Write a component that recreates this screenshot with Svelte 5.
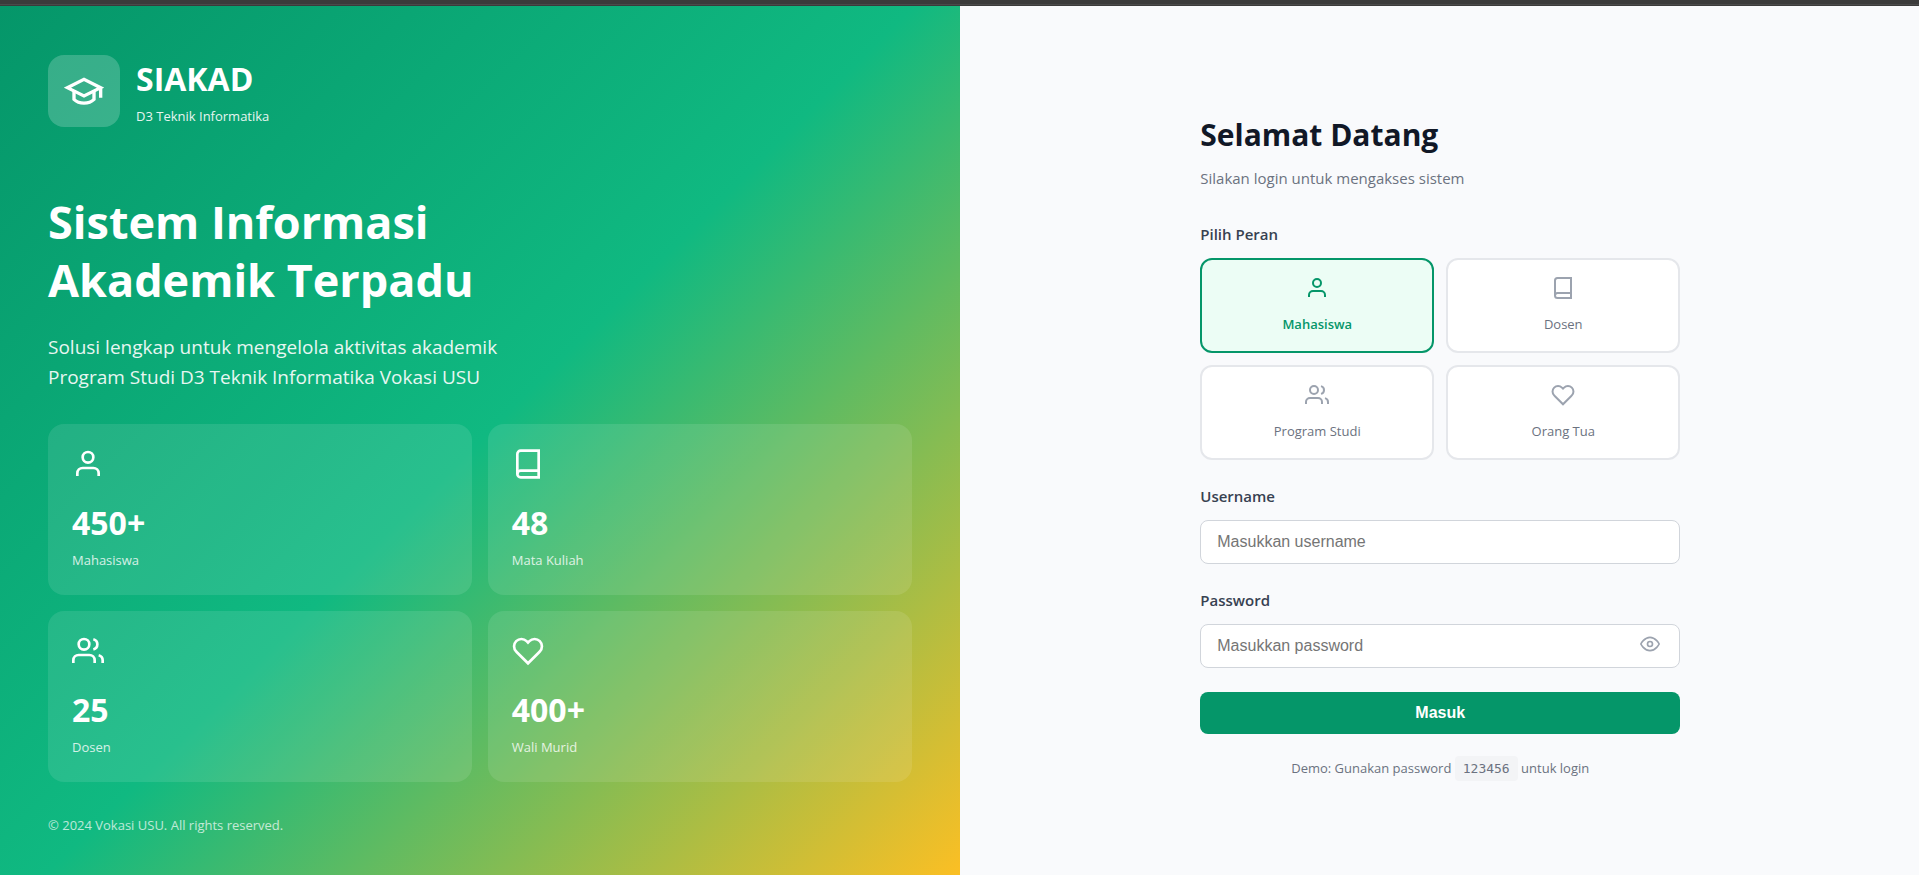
<script>
    let role = $state("mahasiswa");
    let username = $state("");
    let password = $state("");
    let showPassword = $state(false);

    const stats = [
        { icon: "user", value: "450+", label: "Mahasiswa" },
        { icon: "book", value: "48", label: "Mata Kuliah" },
        { icon: "users", value: "25", label: "Dosen" },
        { icon: "heart", value: "400+", label: "Wali Murid" }
    ];

    const roles = [
        { id: "mahasiswa", icon: "user", label: "Mahasiswa" },
        { id: "dosen", icon: "book", label: "Dosen" },
        { id: "prodi", icon: "users", label: "Program Studi" },
        { id: "ortu", icon: "heart", label: "Orang Tua" }
    ];

    function handleSubmit(e) {
        e.preventDefault();
    }
</script>

{#snippet icon(name, size)}
    <svg width={size} height={size} viewBox="0 0 24 24" fill="none" stroke="currentColor" stroke-width="2" aria-hidden="true">
        {#if name === "user"}
            <path d="M20 21v-2a4 4 0 0 0-4-4H8a4 4 0 0 0-4 4v2" />
            <circle cx="12" cy="7" r="4" />
        {:else if name === "book"}
            <path d="M4 19.5A2.5 2.5 0 0 1 6.5 17H20" />
            <path d="M6.5 2H20v20H6.5A2.5 2.5 0 0 1 4 19.5v-15A2.5 2.5 0 0 1 6.5 2z" />
        {:else if name === "users"}
            <path d="M17 21v-2a4 4 0 0 0-4-4H5a4 4 0 0 0-4 4v2" />
            <circle cx="9" cy="7" r="4" />
            <path d="M23 21v-2a4 4 0 0 0-3-3.87" />
            <path d="M16 3.13a4 4 0 0 1 0 7.75" />
        {:else if name === "heart"}
            <path d="M20.84 4.61a5.5 5.5 0 0 0-7.78 0L12 5.67l-1.06-1.06a5.5 5.5 0 0 0-7.78 7.78l1.06 1.06L12 21.23l7.78-7.78 1.06-1.06a5.5 5.5 0 0 0 0-7.78z" />
        {:else if name === "cap"}
            <path d="M22 10v6M2 10l10-5 10 5-10 5z" />
            <path d="M6 12v5c3 3 9 3 12 0v-5" />
        {:else if name === "eye"}
            <path d="M1 12s4-8 11-8 11 8 11 8-4 8-11 8-11-8-11-8z" />
            <circle cx="12" cy="12" r="3" />
        {/if}
    </svg>
{/snippet}

<div class="page">
    <div class="top-strip"></div>
    <div class="login-container">
        <section class="brand-panel">
            <header class="logo">
                <div class="logo-icon">{@render icon("cap", 40)}</div>
                <div>
                    <div class="logo-name">SIAKAD</div>
                    <p class="logo-sub">D3 Teknik Informatika</p>
                </div>
            </header>

            <div class="hero">
                <h1>Sistem Informasi<br />Akademik Terpadu</h1>
                <p class="hero-text">
                    Solusi lengkap untuk mengelola aktivitas akademik<br />
                    Program Studi D3 Teknik Informatika Vokasi USU
                </p>
                <div class="stats">
                    {#each stats as stat}
                        <div class="stat-card">
                            {@render icon(stat.icon, 32)}
                            <div class="stat-value">{stat.value}</div>
                            <div class="stat-label">{stat.label}</div>
                        </div>
                    {/each}
                </div>
            </div>

            <footer>© 2024 Vokasi USU. All rights reserved.</footer>
        </section>

        <main class="form-panel">
            <form onsubmit={handleSubmit}>
                <h2>Selamat Datang</h2>
                <p class="subtitle">Silakan login untuk mengakses sistem</p>

                <div class="field" role="group" aria-labelledby="role-label">
                    <span class="field-label" id="role-label">Pilih Peran</span>
                    <div class="roles">
                        {#each roles as r}
                            <button
                                type="button"
                                class="role-card"
                                class:active={role === r.id}
                                aria-pressed={role === r.id}
                                onclick={() => (role = r.id)}
                            >
                                {@render icon(r.icon, 24)}
                                <span>{r.label}</span>
                            </button>
                        {/each}
                    </div>
                </div>

                <div class="field">
                    <label class="field-label" for="username">Username</label>
                    <input id="username" type="text" placeholder="Masukkan username" bind:value={username} />
                </div>

                <div class="field">
                    <label class="field-label" for="password">Password</label>
                    <div class="password-wrap">
                        <input
                            id="password"
                            type={showPassword ? "text" : "password"}
                            placeholder="Masukkan password"
                            bind:value={password}
                        />
                        <button
                            type="button"
                            class="toggle"
                            aria-label="Tampilkan password"
                            onclick={() => (showPassword = !showPassword)}
                        >
                            {@render icon("eye", 20)}
                        </button>
                    </div>
                </div>

                <button type="submit" class="submit">Masuk</button>

                <p class="demo">Demo: Gunakan password <code>123456</code> untuk login</p>
            </form>
        </main>
    </div>
</div>

<style>
    :global(body) {
        margin: 0;
        background: #f9fafb;
    }

    .page {
        min-height: 100vh;
        display: flex;
        flex-direction: column;
        font-family: "Open Sans", "Noto Sans", sans-serif;
    }

    .page * {
        box-sizing: border-box;
    }

    h1, h2, p {
        margin: 0;
    }

    svg {
        display: block;
    }

    .top-strip {
        height: 6px;
        background: linear-gradient(#3b3b3b 4px, #4a4a4a 4px, #4a4a4a 5px, #3b3b3b 5px);
    }

    .login-container {
        flex: 1;
        display: grid;
        grid-template-columns: 1fr 1fr;
    }

    .brand-panel {
        display: flex;
        flex-direction: column;
        justify-content: space-between;
        padding: 48px 48px 39px;
        color: #fff;
        background: linear-gradient(135deg, #059669 0%, #10b981 50%, #fbbf24 100%);
    }

    .logo {
        display: flex;
        align-items: center;
        gap: 16px;
    }

    .logo-icon {
        width: 72px;
        height: 72px;
        display: flex;
        align-items: center;
        justify-content: center;
        background: rgba(255, 255, 255, 0.2);
        border-radius: 16px;
    }

    .logo-name {
        font-size: 32px;
        font-weight: 700;
        line-height: 50px;
        margin-bottom: 2px;
    }

    .logo-sub {
        font-size: 13px;
        line-height: 21px;
        opacity: 0.9;
    }

    .hero {
        margin-top: 32px;
    }

    h1 {
        font-size: 45px;
        font-weight: 700;
        line-height: 58px;
        margin-bottom: 23px;
    }

    .hero-text {
        font-size: 19px;
        line-height: 30px;
        opacity: 0.9;
        margin-bottom: 32px;
    }

    .stats {
        display: grid;
        grid-template-columns: 1fr 1fr;
        gap: 16px;
    }

    .stat-card {
        padding: 24px;
        background: rgba(255, 255, 255, 0.1);
        border-radius: 16px;
    }

    .stat-value {
        margin: 18px 0 2px;
        font-size: 32px;
        font-weight: 700;
        line-height: 50px;
    }

    .stat-label {
        font-size: 13px;
        line-height: 21px;
        opacity: 0.8;
    }

    footer {
        font-size: 13px;
        line-height: 21px;
        opacity: 0.7;
    }

    .form-panel {
        display: flex;
        align-items: center;
        justify-content: center;
        padding: 56px 48px 48px 50px;
        background: #f9fafc;
    }

    form {
        width: 100%;
        max-width: 480px;
    }

    h2 {
        font-size: 30px;
        font-weight: 700;
        line-height: 50px;
        color: #111827;
        margin-bottom: 6px;
    }

    .subtitle {
        font-size: 15px;
        line-height: 24px;
        color: #6b7280;
        margin-bottom: 32px;
    }

    .field {
        margin-bottom: 24px;
    }

    .field-label {
        display: block;
        margin-bottom: 12px;
        font-size: 15px;
        font-weight: 600;
        line-height: 24px;
        color: #374151;
    }

    .roles {
        display: grid;
        grid-template-columns: 1fr 1fr;
        gap: 12px;
    }

    .role-card {
        display: flex;
        flex-direction: column;
        align-items: center;
        gap: 14px;
        padding: 16px;
        background: #fff;
        border: 2px solid #e5e7eb;
        border-radius: 12px;
        color: #9ca3af;
        font-family: inherit;
        font-size: 13px;
        line-height: 21px;
        cursor: pointer;
    }

    .role-card span {
        color: #6b7280;
    }

    .role-card.active {
        background: #ecfdf5;
        border-color: #059669;
        color: #059669;
    }

    .role-card.active span {
        color: #059669;
        font-weight: 600;
    }

    input {
        display: block;
        width: 100%;
        height: 44px;
        padding: 0 16px;
        background: #fff;
        border: 1px solid #d1d5db;
        border-radius: 8px;
        font-family: Arial, "Liberation Sans", sans-serif;
        font-size: 16px;
        color: #111827;
    }

    input::placeholder {
        color: #757575;
    }

    .password-wrap {
        position: relative;
    }

    .password-wrap input {
        padding-right: 48px;
    }

    .toggle {
        position: absolute;
        top: 10px;
        right: 16px;
        padding: 0 4px;
        border: 0;
        background: none;
        color: #9ca3af;
        cursor: pointer;
    }

    .submit {
        display: block;
        width: 100%;
        height: 42px;
        border: 0;
        border-radius: 8px;
        background: #059669;
        color: #fff;
        font-family: Arial, "Liberation Sans", sans-serif;
        font-size: 16px;
        font-weight: 700;
        cursor: pointer;
    }

    .demo {
        margin-top: 24px;
        text-align: center;
        font-size: 13px;
        line-height: 21px;
        color: #6b7280;
    }

    code {
        padding: 5px 8px;
        border-radius: 4px;
        background: #f3f4f6;
        font-family: "DejaVu Sans Mono", monospace;
        font-size: 13px;
    }
</style>
